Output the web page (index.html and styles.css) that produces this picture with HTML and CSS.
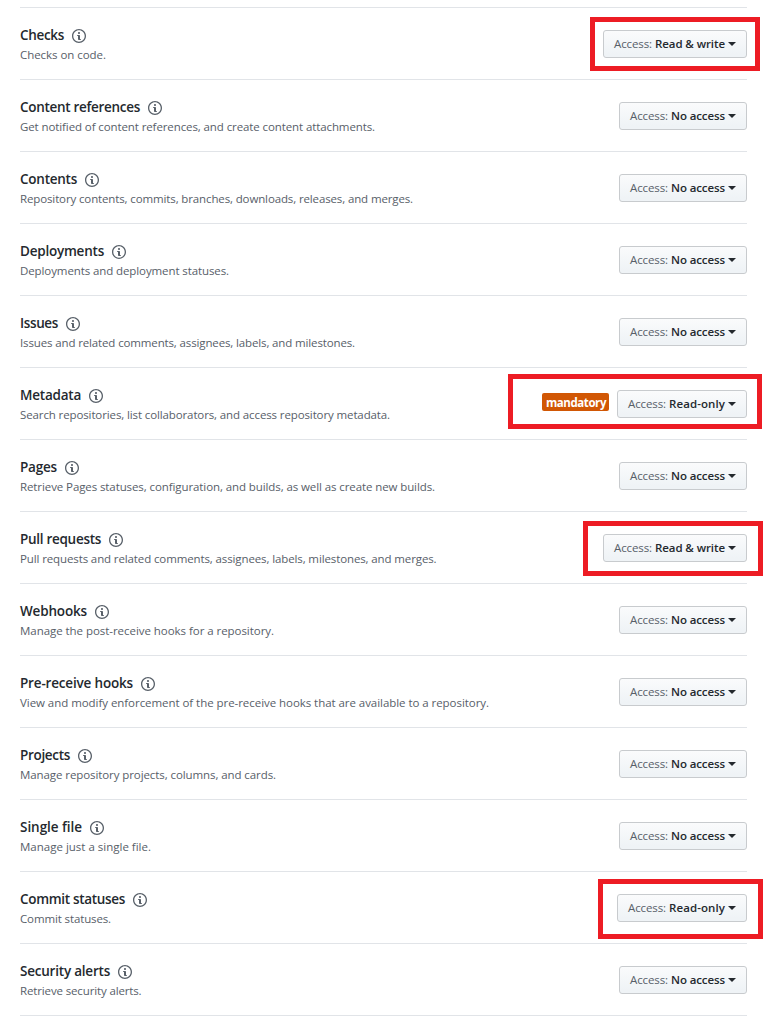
FILE: index.html
```html
<!DOCTYPE html>
<html lang="en">
<head>
<meta charset="utf-8">
<title>Repository permissions</title>
<link rel="stylesheet" href="styles.css">
</head>
<body>
<svg width="0" height="0" class="defs"><defs><symbol id="info" viewBox="0 0 14 16"><path d="M6.3 5.69a.942.942 0 0 1-.28-.7c0-.28.09-.52.28-.7.19-.18.42-.28.7-.28.28 0 .52.09.7.28.18.19.28.42.28.7 0 .28-.09.52-.28.7a1 1 0 0 1-.7.3c-.28 0-.52-.11-.7-.3zM8 7.99c-.02-.25-.11-.48-.31-.69-.2-.19-.42-.3-.69-.31H6c-.27.02-.48.13-.69.31-.2.2-.3.44-.31.69h1v3c.02.27.11.5.31.69.2.2.42.31.69.31h1c.27 0 .48-.11.69-.31.2-.19.3-.42.31-.69H8V7.98v.01zM7 2.3c-3.14 0-5.7 2.54-5.7 5.68 0 3.14 2.56 5.7 5.7 5.7s5.7-2.55 5.7-5.7c0-3.15-2.56-5.69-5.7-5.69v.01zM7 .98c3.86 0 7 3.14 7 7s-3.14 7-7 7-7-3.12-7-7 3.14-7 7-7z"/></symbol></defs></svg>
<ul class="permissions" id="permissions"></ul>
<script src="script.js"></script>
</body>
</html>
```
FILE: styles.css
```css
* { box-sizing: border-box; }
body { margin: 0; background: #fff; color: #24292e; font-family: "Open Sans", "Noto Sans", sans-serif; }
.defs { position: absolute; }
.permissions { list-style: none; margin: 7px 21px 0 20px; padding: 0; border-top: 1px solid #e1e4e8; }
.permission { display: flex; justify-content: space-between; align-items: flex-start; height: 72px; border-bottom: 1px solid #e1e4e8; }
.info { padding-top: 17px; white-space: nowrap; }
.title { display: flex; align-items: center; gap: 8px; height: 21px; margin: 0; font-size: 13.5px; font-weight: 600; line-height: 21px; }
.icon { width: 14px; height: 16px; fill: #586069; position: relative; top: 0.5px; }
.description { margin: 0; font-size: 11.5px; line-height: 18px; color: #586069; }
.control { position: relative; display: flex; align-items: center; gap: 8px; margin-top: 22px; }
.button { display: flex; align-items: center; justify-content: space-between; height: 28px; padding: 0 10px; border: 1px solid #c8cbce; border-radius: 3px; background: linear-gradient(#fafbfc, #eff3f6 90%); color: #24292e; font: 600 11.5px/20px "Open Sans", "Noto Sans", sans-serif; white-space: nowrap; }
.none { width: 128px; }
.read { width: 130px; }
.write { width: 144px; }
.prefix { font-weight: 400; color: #586069; }
.caret { border: 4px solid transparent; border-top-color: #24292e; border-bottom: 0; }
.label { height: 18px; width: 67px; padding-left: 4px; border-radius: 2px; background: #d15704; color: #fff; font-size: 11.5px; font-weight: 700; line-height: 19px; position: relative; top: -2px; }
.highlight { position: absolute; border: 5px solid #ed1c24; }
.highlight-checks { right: -13px; top: -13px; width: 170px; height: 54px; }
.highlight-metadata { right: -15px; top: -16px; width: 254px; height: 55px; }
.highlight-pulls { right: -16px; top: -13px; width: 180px; height: 55px; }
.highlight-statuses { right: -16px; top: -15px; width: 165px; height: 60px; }
```
FILE: script.js
```js
const accessLevels = {
  none: ['No access', 54],
  read: ['Read-only', 56],
  write: ['Read &amp; write', 70]
};
// title, title width, description, description width, access, highlight, mandatory
const permissions = [
  ['Checks', 44, 'Checks on code.', 86, 'write', 'checks'],
  ['Content references', 120, 'Get notified of content references, and create content attachments.', 355, 'none'],
  ['Contents', 57, 'Repository contents, commits, branches, downloads, releases, and merges.', 393, 'none'],
  ['Deployments', 84, 'Deployments and deployment statuses.', 209, 'none'],
  ['Issues', 38, 'Issues and related comments, assignees, labels, and milestones.', 335, 'none'],
  ['Metadata', 61, 'Search repositories, list collaborators, and access repository metadata.', 370, 'read', 'metadata', true],
  ['Pages', 37, 'Retrieve Pages statuses, configuration, and builds, as well as create new builds.', 415, 'none'],
  ['Pull requests', 81, 'Pull requests and related comments, assignees, labels, milestones, and merges.', 416.5, 'write', 'pulls'],
  ['Webhooks', 67, 'Manage the post-receive hooks for a repository.', 254, 'none'],
  ['Pre-receive hooks', 113, 'View and modify enforcement of the pre-receive hooks that are available to a repository.', 469, 'none'],
  ['Projects', 50, 'Manage repository projects, columns, and cards.', 256, 'none'],
  ['Single file', 62, 'Manage just a single file.', 131, 'none'],
  ['Commit statuses', 105, 'Commit statuses.', 91, 'read', 'statuses'],
  ['Security alerts', 90, 'Retrieve security alerts.', 121.5, 'none']
];
const list = document.getElementById('permissions');
list.innerHTML = permissions.map(([title, titleWidth, description, width, access, highlight, mandatory]) => `
  <li class="permission">
    <div class="info">
      <h2 class="title"><span data-width="${titleWidth}">${title}</span><svg class="icon"><use href="#info"/></svg></h2>
      <p class="description"><span data-width="${width}">${description}</span></p>
    </div>
    <div class="control">
      ${mandatory ? '<span class="label"><span data-width="60">mandatory</span></span>' : ''}
      <button class="button ${access}"><span><span class="prefix" data-width="38">Access:</span> <span data-width="${accessLevels[access][1]}">${accessLevels[access][0]}</span></span><span class="caret"></span></button>
      ${highlight ? `<span class="highlight highlight-${highlight}"></span>` : ''}
    </div>
  </li>`).join('');

// Track each text run so that it takes up its listed width.
list.querySelectorAll('[data-width]').forEach((run) => {
  const spare = run.dataset.width - run.getBoundingClientRect().width;
  run.style.letterSpacing = `${spare / run.textContent.length}px`;
});
```
